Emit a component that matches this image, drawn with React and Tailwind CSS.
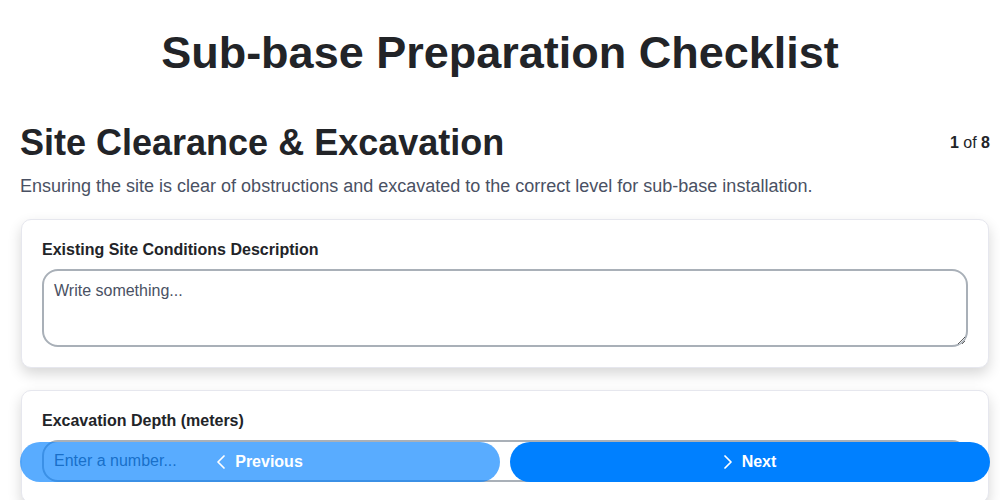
import React from "react";
import { ChevronLeft, ChevronRight } from "lucide-react";

const fields = [
  {
    label: "Existing Site Conditions Description",
    type: "textarea",
    placeholder: "Write something...",
  },
  {
    label: "Excavation Depth (meters)",
    type: "number",
    placeholder: "Enter a number...",
  },
];

const App = () => {
  const [step] = React.useState(1);

  return (
    <div className="min-h-screen bg-white text-[#222428] font-['Liberation_Sans',Arial,sans-serif]">
      <h1 className="text-center text-[45px] font-bold leading-[54px] pt-[26px] mb-[43px]">
        Sub-base Preparation Checklist
      </h1>

      <div className="pl-5 pr-[10px] pb-28">
        <div className="flex items-center justify-between">
          <h2 className="text-4xl font-bold leading-[40px]">
            Site Clearance &amp; Excavation
          </h2>
          <div className="text-base">
            <span className="font-bold">{step}</span> of{" "}
            <span className="font-bold">8</span>
          </div>
        </div>

        <p className="text-[18px] text-[#4a5163] mt-[11px] mb-[21px] leading-6">
          Ensuring the site is clear of obstructions and excavated to the
          correct level for sub-base installation.
        </p>

        <div className="flex flex-col gap-[22px]">
          {fields.map((field) => (
            <div
              key={field.label}
              className="mx-px rounded-[10px] border border-[#e6e7ee] bg-white px-5 pt-[21px] pb-5 shadow-[0_6px_14px_rgba(0,0,0,0.16)]"
            >
              <label className="block text-base font-bold leading-[18px] mb-[10px]">
                {field.label}
              </label>
              {field.type === "textarea" ? (
                <textarea
                  rows={2}
                  placeholder={field.placeholder}
                  className="block w-full h-[78px] rounded-2xl border-2 border-[#a9b0b8] px-2.5 py-2 text-base placeholder:text-[#4a5163] outline-none resize-y"
                />
              ) : (
                <input
                  type="number"
                  placeholder={field.placeholder}
                  className="block w-full h-[42px] rounded-2xl border-2 border-[#a9b0b8] px-2.5 text-base placeholder:text-[#4a5163] outline-none"
                />
              )}
            </div>
          ))}
        </div>
      </div>

      {/* Nav buttons */}
      <div className="fixed left-5 right-[10px] bottom-[18px] flex gap-[10px]">
        <button
          disabled
          className="flex-1 h-10 rounded-full bg-[#0080ff] opacity-65 text-white font-bold text-base flex items-center justify-center gap-[2px] pr-2"
        >
          <ChevronLeft className="h-6 w-6" strokeWidth={1.75} />
          Previous
        </button>
        <button className="flex-1 h-10 rounded-full bg-[#0080ff] text-white font-bold text-base flex items-center justify-center gap-[2px] pr-2">
          <ChevronRight className="h-6 w-6" strokeWidth={1.75} />
          Next
        </button>
      </div>
    </div>
  );
};

export default App;
